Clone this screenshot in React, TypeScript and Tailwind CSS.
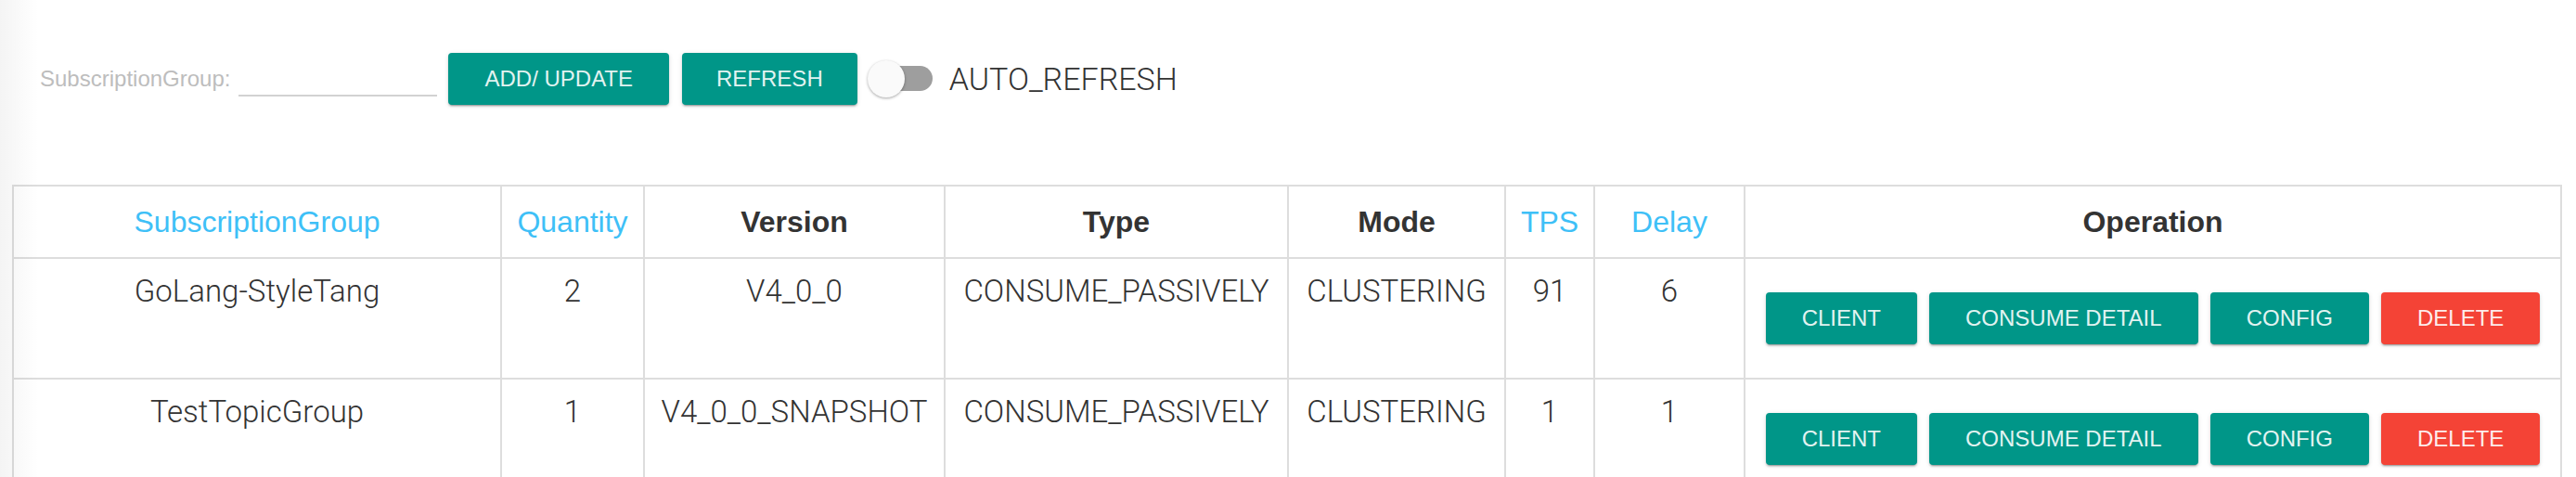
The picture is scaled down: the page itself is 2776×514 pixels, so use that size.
import { useState } from "react";

type Row = {
  group: string;
  quantity: number;
  version: string;
  type: string;
  mode: string;
  tps: number;
  delay: number;
};

const ROWS: Row[] = [
  { group: "GoLang-StyleTang", quantity: 2, version: "V4_0_0", type: "CONSUME_PASSIVELY", mode: "CLUSTERING", tps: 91, delay: 6 },
  { group: "TestTopicGroup", quantity: 1, version: "V4_0_0_SNAPSHOT", type: "CONSUME_PASSIVELY", mode: "CLUSTERING", tps: 1, delay: 1 },
];

const COLUMNS = [
  { label: "SubscriptionGroup", sortable: true },
  { label: "Quantity", sortable: true },
  { label: "Version", sortable: false },
  { label: "Type", sortable: false },
  { label: "Mode", sortable: false },
  { label: "TPS", sortable: true },
  { label: "Delay", sortable: true },
  { label: "Operation", sortable: false },
];

const SHADOW =
  "shadow-[0_2px_2px_rgba(0,0,0,0.14),0_3px_1px_-2px_rgba(0,0,0,0.2),0_1px_5px_rgba(0,0,0,0.12)]";

function Btn({ children, danger = false, tight = false }: { children: string; danger?: boolean; tight?: boolean }) {
  return (
    <button
      className={
        (danger ? "bg-[#f44336] text-[#fdeceb]" : "bg-[#009688] text-[#e2f3f1]") +
        (tight ? " px-[37px]" : " px-[39px]") +
        " h-[56px] rounded-[4px] text-[24px] leading-none whitespace-nowrap " +
        SHADOW
      }
    >
      {children}
    </button>
  );
}

export default function App() {
  const [auto, setAuto] = useState(false);
  const [group, setGroup] = useState("");

  return (
    <div
      className="relative min-h-[514px] bg-white text-[#333] overflow-hidden"
      style={{ fontFamily: '"Liberation Sans", Arial, sans-serif' }}
    >
      {/* left edge shadow */}
      <div className="absolute left-0 top-0 bottom-0 w-[42px] bg-gradient-to-r from-[rgba(0,0,0,0.045)] to-transparent pointer-events-none z-10" />

      {/* Toolbar */}
      <div className="pt-[57px] pl-[43px] flex items-center h-[113px]">
        <label className="text-[24px] text-[#bdbdbd] mr-[9px] leading-none">SubscriptionGroup:</label>
        <input
          value={group}
          onChange={(e) => setGroup(e.target.value)}
          className="w-[214px] h-[38px] border-b-2 border-[#d2d2d2] outline-none text-[24px] bg-transparent"
        />
        <div className="ml-[12px] flex gap-[14px]">
          <Btn>ADD/ UPDATE</Btn>
          <Btn tight>REFRESH</Btn>
        </div>
        <button onClick={() => setAuto(!auto)} className="relative ml-[11px] w-[70px] h-[40px]">
          <span className="absolute right-0 top-[6px] w-[58px] h-[27px] rounded-full bg-[#9e9e9e]" />
          <span className="absolute left-0 top-0 w-[40px] h-[40px] rounded-full bg-[#fafafa] shadow-[0_1px_3px_rgba(0,0,0,0.35)]" />
        </button>
        <span
          className="ml-[18px] text-[34px] font-light text-[#333] leading-none"
          style={{ fontFamily: 'Roboto, "Liberation Sans", sans-serif' }}
        >
          AUTO_REFRESH
        </span>
      </div>

      {/* Table */}
      <div className="mt-[86px] ml-[13px]">
        <table className="table-fixed border-collapse w-[2746px] text-[32px]">
          <colgroup>
            <col className="w-[526px]" />
            <col className="w-[154px]" />
            <col className="w-[324px]" />
            <col className="w-[370px]" />
            <col className="w-[234px]" />
            <col className="w-[96px]" />
            <col className="w-[162px]" />
            <col className="w-[880px]" />
          </colgroup>
          <thead>
            <tr>
              {COLUMNS.map((c) => (
                <th
                  key={c.label}
                  className={
                    "border-2 border-[#dddddd] h-[78px] text-center align-middle leading-[36px] " +
                    (c.sortable ? "font-normal text-[#3ec0f7]" : "font-bold text-[#333]")
                  }
                >
                  {c.label}
                </th>
              ))}
            </tr>
          </thead>
          <tbody
            className="font-light text-[#333]"
            style={{ fontFamily: 'Roboto, "Liberation Sans", sans-serif' }}
          >
            {ROWS.map((r) => (
              <tr key={r.group}>
                {[r.group, r.quantity, r.version, r.type, r.mode, r.tps, r.delay].map((v, i) => (
                  <td
                    key={i}
                    className="border-2 border-[#dddddd] h-[130px] pt-[17px] align-top text-center leading-[36px] text-[33px] whitespace-nowrap"
                  >
                    {v}
                  </td>
                ))}
                <td
                  className="border-2 border-[#dddddd] h-[130px] align-middle"
                  style={{ fontFamily: '"Liberation Sans", Arial, sans-serif' }}
                >
                  <div className="flex justify-center gap-[13px] font-normal">
                    <Btn>CLIENT</Btn>
                    <Btn>CONSUME DETAIL</Btn>
                    <Btn>CONFIG</Btn>
                    <Btn danger>DELETE</Btn>
                  </div>
                </td>
              </tr>
            ))}
          </tbody>
        </table>
      </div>
    </div>
  );
}
